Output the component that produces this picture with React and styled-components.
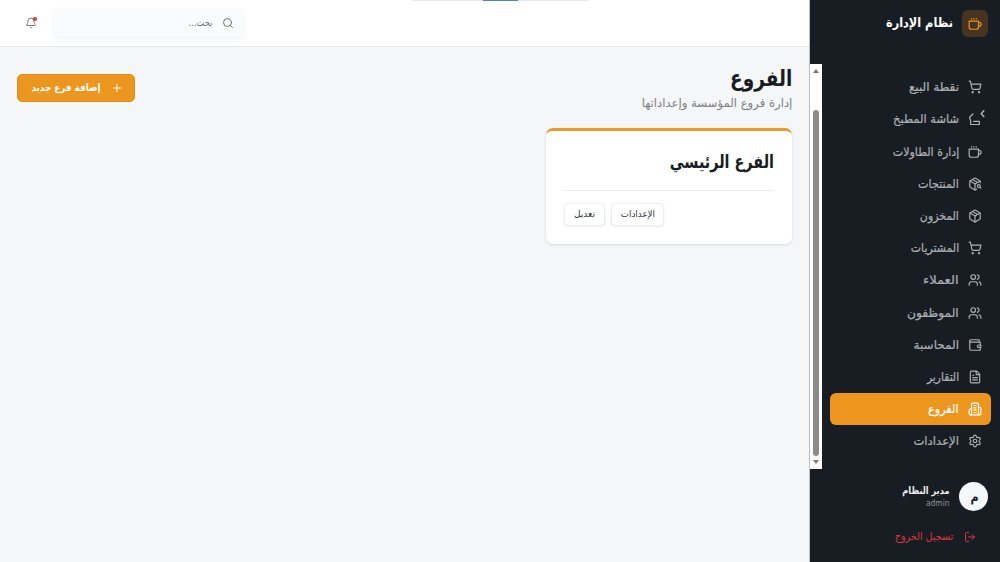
import React from "react";
import styled, { createGlobalStyle } from "styled-components";
import {
  Bell,
  FileText,
  LogOut,
  Package,
  PackageSearch,
  Plus,
  Search,
  Settings,
  ShoppingCart,
  Users,
} from "lucide-react";

const GlobalStyle = createGlobalStyle`
  * {
    box-sizing: border-box;
  }
  body {
    margin: 0;
    overflow: hidden;
    background: #f4f6f8;
    font-family: "DejaVu Sans", sans-serif;
    color: #181d23;
  }
  button {
    font-family: inherit;
  }
  svg {
    flex-shrink: 0;
  }
`;

const Page = styled.div`
  direction: rtl;
  display: flex;
  width: 1000px;
  height: 562px;
`;

const Sidebar = styled.aside`
  width: 190px;
  flex-shrink: 0;
  display: flex;
  flex-direction: column;
  background: #181d23;
`;

const Brand = styled.div`
  height: 64px;
  padding: 10px 12px 0;
  display: flex;
  gap: 9px;
`;

const BrandIcon = styled.div`
  width: 26px;
  height: 27px;
  border-radius: 6px;
  background: #463420;
  color: #e8951f;
  display: flex;
  align-items: center;
  justify-content: center;
`;

/* the glyph run is squeezed horizontally from its starting edge */
const Label = styled.span`
  display: block;
  white-space: nowrap;
  font-size: ${(p) => p.$size}px;
  font-weight: ${(p) => (p.$bold ? 700 : 400)};
  line-height: ${(p) => p.$line || 26}px;
  color: ${(p) => p.$color || "inherit"};
  transform: scaleX(${(p) => p.$sx || 1});
  transform-origin: right center;
`;

const NavArea = styled.div`
  height: 405px;
  display: flex;
`;

const Nav = styled.nav`
  flex: 1;
  padding: 7px 9px 0 8px;
`;

const NavItem = styled.div`
  height: 32.2px;
  padding: 0.4px 9px 0 0;
  display: flex;
  align-items: center;
  gap: 9px;
  border-radius: 6px;
  color: ${(p) => (p.$active ? "#fff" : "#adb0b4")};
  background: ${(p) => (p.$active ? "#ed961f" : "transparent")};
  -webkit-text-stroke: 0.2px currentColor;
`;

const ScrollTrack = styled.div`
  width: 12px;
  background: #fff;
  display: flex;
  flex-direction: column;
  align-items: center;
`;

const Arrow = styled.div`
  width: 0;
  height: 0;
  margin: ${(p) => (p.$up ? "5px 0 37px" : "4px 0 0")};
  border: 3px solid transparent;
  border-top: ${(p) => (p.$up ? "0" : "4px solid #777")};
  border-bottom: ${(p) => (p.$up ? "4px solid #777" : "0")};
`;

const Thumb = styled.div`
  width: 6px;
  height: 346px;
  border-radius: 3px;
  background: #8b8b8b;
`;

const User = styled.div`
  margin-top: 12.5px;
  padding: 0 12px;
  display: flex;
  gap: 9px;
`;

const Avatar = styled.div`
  width: 29px;
  height: 29px;
  border-radius: 50%;
  background: #f5f8fb;
  color: #181d23;
  display: flex;
  justify-content: center;
`;

const Logout = styled.div`
  margin-top: 15px;
  padding-right: 24px;
  display: flex;
  align-items: center;
  gap: 11px;
  color: #dc3545;
`;

const Main = styled.main`
  flex: 1;
  min-width: 0;
  border-right: 1px solid #b8bec5;
`;

const TopBar = styled.header`
  height: 47px;
  padding-left: 25px;
  display: flex;
  align-items: center;
  justify-content: flex-end;
  gap: 17px;
  background: #fff;
  border-bottom: 1px solid #e6e8eb;
`;

const LoadingBar = styled.div`
  position: absolute;
  top: 0;
  left: 412px;
  width: 177px;
  height: 1px;
  padding: 0 71px;
  background: #e9eaec;
`;

const LoadingValue = styled.div`
  height: 1px;
  background: #4a86bd;
`;

const SearchBox = styled.div`
  width: 190px;
  height: 28px;
  padding-right: 10px;
  display: flex;
  align-items: center;
  gap: 9px;
  border-radius: 5px;
  background: #fafbfc;
  box-shadow: 0 1px 4px rgba(30, 50, 70, 0.08);
  color: #6c7075;
`;

const BellWrap = styled.div`
  position: relative;
  width: 12px;
  height: 12px;
  color: #777b80;
  svg {
    display: block;
  }
`;

const Dot = styled.i`
  position: absolute;
  top: 0;
  right: 0;
  width: 4px;
  height: 4px;
  border-radius: 50%;
  background: #e5343d;
`;

const Content = styled.div`
  padding: 18px 17px 0;
`;

const Heading = styled.div`
  height: 63px;
  display: flex;
  justify-content: space-between;
`;

const AddButton = styled.button`
  width: 118px;
  height: 28px;
  margin-top: 9px;
  padding: 0 11px 0 0;
  display: flex;
  align-items: center;
  gap: 10px;
  border: 1px solid #dc8d20;
  border-radius: 5px;
  background: #ed961f;
  color: #fff;
`;

const BranchCard = styled.section`
  width: 246px;
  height: 115.5px;
  padding: 18px 18px 0;
  border-top: 3px solid #e99a2b;
  border-radius: 7px;
  background: #fff;
  box-shadow: 0 1px 3px rgba(20, 30, 40, 0.13);
`;

const Actions = styled.div`
  margin-top: 15px;
  padding-top: 12px;
  border-top: 1px solid #eaecee;
  display: flex;
  justify-content: flex-end;
  gap: 6px;
`;

const SmallButton = styled.button`
  width: ${(p) => p.$width}px;
  height: 23px;
  padding: 0 8px;
  border: 1px solid #eceef0;
  border-radius: 4px;
  background: #fff;
  box-shadow: 0 1px 2px rgba(20, 30, 40, 0.08);
  color: #30343a;
`;

const LineIcon = styled.svg.attrs({
  viewBox: "0 0 24 24",
  fill: "none",
  stroke: "currentColor",
  strokeWidth: 2,
  strokeLinecap: "round",
  strokeLinejoin: "round",
})`
  width: ${(p) => p.$size}px;
  height: ${(p) => p.$size}px;
`;

const CupIcon = ({ size }) => (
  <LineIcon $size={size}>
    <path d="M18 9h1a3.5 3.5 0 1 1 0 7h-1" />
    <path d="M2 7h16v10a4 4 0 0 1-4 4H6a4 4 0 0 1-4-4Z" />
    <path d="M6 2.5v1M10 2.5v1M14 2.5v1" />
  </LineIcon>
);

const WalletIcon = ({ size }) => (
  <LineIcon $size={size}>
    <path d="M21 12V7H5a2 2 0 0 1 0-4h14v4" />
    <path d="M3 5v14a2 2 0 0 0 2 2h16v-5" />
    <path d="M18 12a2 2 0 0 0 0 4h4v-4Z" />
  </LineIcon>
);

const BranchIcon = ({ size }) => (
  <LineIcon $size={size}>
    <path d="M6 22V4a2 2 0 0 1 2-2h8a2 2 0 0 1 2 2v18Z" />
    <path d="M6 12H4a2 2 0 0 0-2 2v6a2 2 0 0 0 2 2h2" />
    <path d="M18 9h2a2 2 0 0 1 2 2v9a2 2 0 0 1-2 2h-2" />
    <path d="M10 6h4M10 10h4M10 14h4M10 18h4" />
  </LineIcon>
);

const KitchenSvg = styled.svg`
  overflow: visible;
`;

const KitchenIcon = () => (
  <KitchenSvg width="14" height="14" viewBox="0 0 14 14" fill="none" stroke="currentColor" strokeWidth="1.2" strokeLinecap="round" strokeLinejoin="round">
    <path d="M5 2L1.6 5.2C1.6 7 2.6 7.5 2.6 8.8V12.5H11.4V9.4H5.5" />
    <path d="M15.8 -1.2L13.2 1.7L15.8 4.6" strokeWidth="1.5" />
  </KitchenSvg>
);

const navItems = [
  { text: "نقطة البيع", icon: ShoppingCart, sx: 1 },
  { text: "شاشة المطبخ", icon: KitchenIcon, sx: 0.955 },
  { text: "إدارة الطاولات", icon: CupIcon, sx: 0.92 },
  { text: "المنتجات", icon: PackageSearch, sx: 0.93 },
  { text: "المخزون", icon: Package, sx: 0.91 },
  { text: "المشتريات", icon: ShoppingCart, sx: 0.91 },
  { text: "العملاء", icon: Users, sx: 1.09 },
  { text: "الموظفون", icon: Users, sx: 1.02 },
  { text: "المحاسبة", icon: WalletIcon, sx: 1 },
  { text: "التقارير", icon: FileText, sx: 0.89 },
  { text: "الفروع", icon: BranchIcon, sx: 0.94, active: true },
  { text: "الإعدادات", icon: Settings, sx: 0.97 },
];

const App = () => {
  return (
    <>
      <GlobalStyle />
      <Page>
        <Sidebar>
          <Brand>
            <BrandIcon>
              <CupIcon size={14} />
            </BrandIcon>
            <Label $size={13} $bold $sx={0.87} $color="#fff">نظام الإدارة</Label>
          </Brand>
          <NavArea>
            <Nav>
              {navItems.map((item) => (
                <NavItem key={item.text} $active={item.active}>
                  <item.icon size={14} />
                  <Label $size={12} $sx={item.sx}>{item.text}</Label>
                </NavItem>
              ))}
            </Nav>
            <ScrollTrack>
              <Arrow $up />
              <Thumb />
              <Arrow />
            </ScrollTrack>
          </NavArea>
          <User>
            <Avatar>
              <Label $size={13} $bold $line={29} $sx={0.85}>م</Label>
            </Avatar>
            <div>
              <Label $size={10} $bold $line={17} $sx={0.82} $color="#eee">مدير النظام</Label>
              <Label $size={8} $line={10} $sx={0.94} $color="#8f9398">admin</Label>
            </div>
          </User>
          <Logout>
            <LogOut size={12} />
            <Label $size={11} $line={22} $sx={0.87}>تسجيل الخروج</Label>
          </Logout>
        </Sidebar>
        <Main>
          <TopBar>
            <SearchBox>
              <Search size={12} />
              <Label $size={10} $sx={0.84}>بحث...</Label>
            </SearchBox>
            <BellWrap>
              <Bell size={12} />
              <Dot />
            </BellWrap>
          </TopBar>
          <LoadingBar>
            <LoadingValue />
          </LoadingBar>
          <Content>
            <Heading>
              <div>
                <Label $size={22} $bold $line={28} $sx={0.84}>الفروع</Label>
                <Label $size={12} $line={20} $sx={0.97} $color="#7d8084">إدارة فروع المؤسسة وإعداداتها</Label>
              </div>
              <AddButton>
                <Plus size={12} />
                <Label $size={10} $bold $sx={0.88}>إضافة فرع جديد</Label>
              </AddButton>
            </Heading>
            <BranchCard>
              <Label $size={18} $bold $line={26} $sx={0.8}>الفرع الرئيسي</Label>
              <Actions>
                <SmallButton $width={53}>
                  <Label $size={9} $line={19} $sx={0.97}>الإعدادات</Label>
                </SmallButton>
                <SmallButton $width={41}>
                  <Label $size={9} $line={19} $sx={1}>تعديل</Label>
                </SmallButton>
              </Actions>
            </BranchCard>
          </Content>
        </Main>
      </Page>
    </>
  );
};

export default App;
